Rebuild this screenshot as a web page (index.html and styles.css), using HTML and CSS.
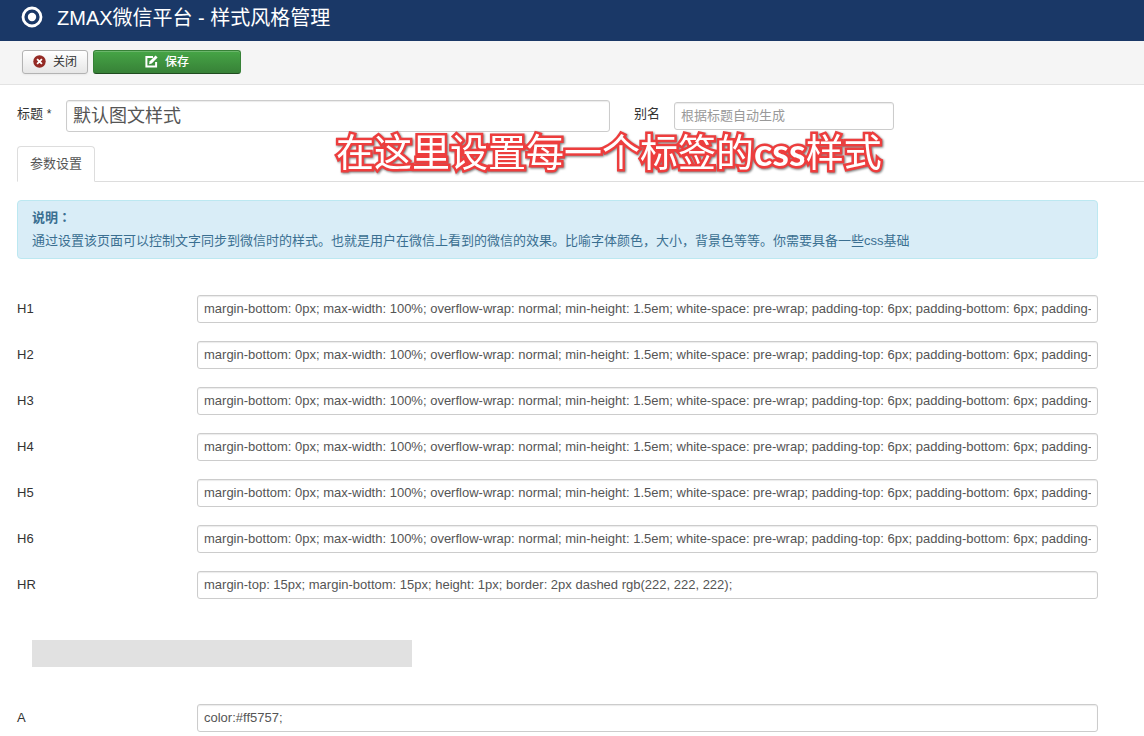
FILE: index.html
```html
<!DOCTYPE html>
<html lang="zh-CN">
<head>
<meta charset="utf-8">
<meta name="viewport" content="width=device-width, initial-scale=1">
<title>ZMAX微信平台 - 样式风格管理</title>
<link rel="stylesheet" href="styles.css">
</head>
<body>
<header class="header">
  <svg class="header-icon" viewBox="0 0 22 22" aria-hidden="true"><circle cx="11" cy="11" r="9" fill="none" stroke="#fff" stroke-width="2.8"/><circle cx="11" cy="11" r="4.2" fill="#fff"/></svg>
  <h1 class="header-title">ZMAX微信平台 - 样式风格管理</h1>
</header>
<div class="toolbar">
  <button class="btn" type="button">
    <svg class="btn-icon" viewBox="0 0 13 13" aria-hidden="true"><circle cx="6.5" cy="6.5" r="6.2" fill="#942a25"/><path d="M4.1 4.1l4.8 4.8M8.9 4.1l-4.8 4.8" stroke="#fff" stroke-width="1.8"/></svg>
    关闭
  </button>
  <button class="btn btn-save" type="button">
    <svg class="btn-icon" viewBox="0 0 13 13" aria-hidden="true"><path d="M8 1.9H1.4v9.7h9.7V7" fill="none" stroke="#fff" stroke-width="2"/><path d="M4 9.2l.7-2.9L10.6.4l2 2-5.9 6z" fill="#fff"/></svg>
    保存
  </button>
</div>
<main class="content">
  <div class="title-row">
    <label class="title-label" for="title">标题 <span class="star">*</span></label>
    <input class="field field-title" id="title" type="text" value="默认图文样式">
    <label class="alias-label" for="alias">别名</label>
    <input class="field field-alias" id="alias" type="text" placeholder="根据标题自动生成">
    <p class="callout">在这里设置每一个标签的<span class="callout-latin">css</span>样式</p>
  </div>
  <nav class="tabs"><a class="tab" href="#params">参数设置</a></nav>
  <section class="panel" id="params">
    <div class="alert">
      <h2 class="alert-title">说明<span class="centered-mark" lang="zh-TW">：</span></h2>
      <p class="alert-text">通过设置该页面可以控制文字同步到微信时的样式。也就是用户在微信上看到的微信的效果。比喻字体颜色，大小，背景色等等。你需要具备一些css基础</p>
    </div>
    <div class="row"><label class="row-label" for="h1">H1</label><input class="field" id="h1" type="text" value="margin-bottom: 0px; max-width: 100%; overflow-wrap: normal; min-height: 1.5em; white-space: pre-wrap; padding-top: 6px; padding-bottom: 6px; padding-"></div>
    <div class="row"><label class="row-label" for="h2">H2</label><input class="field" id="h2" type="text" value="margin-bottom: 0px; max-width: 100%; overflow-wrap: normal; min-height: 1.5em; white-space: pre-wrap; padding-top: 6px; padding-bottom: 6px; padding-"></div>
    <div class="row"><label class="row-label" for="h3">H3</label><input class="field" id="h3" type="text" value="margin-bottom: 0px; max-width: 100%; overflow-wrap: normal; min-height: 1.5em; white-space: pre-wrap; padding-top: 6px; padding-bottom: 6px; padding-"></div>
    <div class="row"><label class="row-label" for="h4">H4</label><input class="field" id="h4" type="text" value="margin-bottom: 0px; max-width: 100%; overflow-wrap: normal; min-height: 1.5em; white-space: pre-wrap; padding-top: 6px; padding-bottom: 6px; padding-"></div>
    <div class="row"><label class="row-label" for="h5">H5</label><input class="field" id="h5" type="text" value="margin-bottom: 0px; max-width: 100%; overflow-wrap: normal; min-height: 1.5em; white-space: pre-wrap; padding-top: 6px; padding-bottom: 6px; padding-"></div>
    <div class="row"><label class="row-label" for="h6">H6</label><input class="field" id="h6" type="text" value="margin-bottom: 0px; max-width: 100%; overflow-wrap: normal; min-height: 1.5em; white-space: pre-wrap; padding-top: 6px; padding-bottom: 6px; padding-"></div>
    <div class="row"><label class="row-label" for="hr">HR</label><input class="field" id="hr" type="text" value="margin-top: 15px; margin-bottom: 15px; height: 1px; border: 2px dashed rgb(222, 222, 222);"></div>
    <div class="bar"></div>
    <div class="row"><label class="row-label" for="a">A</label><input class="field" id="a" type="text" value="color:#ff5757;"></div>
  </section>
</main>
</body>
</html>
```
FILE: styles.css
```css
* { box-sizing: border-box; }

body {
  margin: 0;
  background: #fff;
  color: #333;
  font: 13px/18px "Liberation Sans", "Noto Sans CJK SC", sans-serif;
}

.header {
  display: flex;
  align-items: center;
  gap: 14px;
  height: 41px;
  padding: 0 21px 6px;
  background: #1a3867;
}

.header-icon { width: 22px; height: 22px; margin-top: -2px; }

.header-title {
  margin: 0;
  color: #fff;
  font-size: 20px;
  font-weight: 400;
  line-height: 34px;
}

.toolbar {
  display: flex;
  gap: 5px;
  padding: 9px 22px 10px;
  background: #f5f5f5;
  border-bottom: 1px solid #e3e3e3;
}

.btn {
  display: flex;
  align-items: center;
  justify-content: center;
  gap: 7px;
  width: 66px;
  height: 24px;
  padding: 0;
  border: 1px solid #b3b3b3;
  border-radius: 3px;
  background: linear-gradient(#fff, #e6e6e6);
  box-shadow: inset 0 1px 0 #fff, 0 1px 2px rgba(0, 0, 0, .05);
  color: #333;
  font: 12px/20px "Liberation Sans", "Noto Sans CJK SC", sans-serif;
}

.btn-icon { width: 13px; height: 13px; margin-bottom: 2px; }

.btn-save {
  width: 148px;
  border-color: #378137 #378137 #204b20;
  background: linear-gradient(#46a546, #378137);
  box-shadow: inset 0 1px 0 rgba(255, 255, 255, .2);
  color: #fff;
  font-weight: 500;
}

.content { padding: 15px 0 0 17px; }

.title-row {
  position: relative;
  display: flex;
  align-items: center;
  height: 32px;
}

.title-label { width: 49px; padding-bottom: 4px; }

.star { font-size: 12px; }

.field {
  flex: 1;
  min-width: 0;
  height: 28px;
  padding: 0 6px 2px;
  border: 1px solid #ccc;
  border-radius: 3px;
  background: #fff;
  box-shadow: inset 0 1px 1px rgba(0, 0, 0, .08);
  color: #555;
  font: 13px/18px "Liberation Sans", "Noto Sans CJK SC", sans-serif;
}

.field::placeholder { color: #999; opacity: 1; }

.field-title { flex: 0 1 544px; height: 32px; padding-bottom: 4px; font-size: 18px; }

.alias-label { flex: none; width: 40px; margin-left: 24px; padding-bottom: 4px; }

.field-alias { flex: 0 1 220px; }

.callout {
  position: absolute;
  top: 25px;
  left: 319px;
  margin: 0;
  color: #fff;
  font: 400 38px/52px "Noto Sans", "Noto Sans CJK SC", sans-serif;
  white-space: nowrap;
  -webkit-text-stroke: 5px #ed3d3d;
  paint-order: stroke fill;
  filter: drop-shadow(1px 1px 1px #777);
}

.callout-latin { font-family: Lato, sans-serif; font-weight: 700; }

.tabs {
  display: flex;
  margin-top: 14px;
  border-bottom: 1px solid #ddd;
}

.tab {
  margin-bottom: -1px;
  padding: 8px 12px;
  border: 1px solid #ddd;
  border-bottom-color: #fff;
  border-radius: 4px 4px 0 0;
  background: #fff;
  color: #555;
  text-decoration: none;
}

.panel { padding: 18px 46px 0 0; }

.alert {
  margin-bottom: 36px;
  padding: 7px 14px 8px;
  border: 1px solid #bce8f1;
  border-radius: 4px;
  background: #d9edf7;
  color: #3a6f91;
}

.alert-title { margin: 0 0 4px; font-size: 13px; line-height: 18px; }

.centered-mark { font-family: "Noto Sans CJK TC", sans-serif; }

.alert-text { margin: 0; line-height: 19px; }

.row { display: flex; margin-bottom: 18px; }

.row-label { width: 180px; padding-top: 5px; }

.bar {
  width: 380px;
  max-width: 100%;
  height: 27px;
  margin: 41px 0 37px 15px;
  background: #e1e1e1;
}
```
